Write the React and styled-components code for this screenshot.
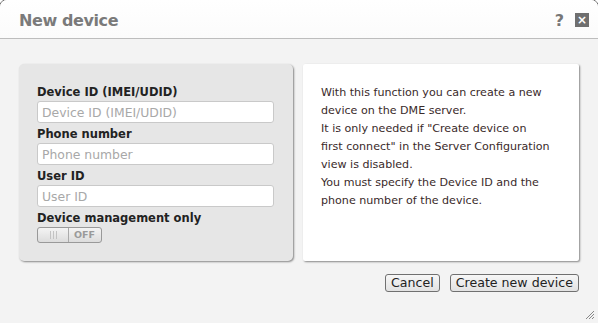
import React from 'react';
import styled, {createGlobalStyle} from 'styled-components';

const GlobalStyle = createGlobalStyle`
    html, body {
        margin: 0;
        padding: 0;
        background: #fff;
        overflow: hidden;
    }
    body {
        font-family: "DejaVu Sans", Verdana, sans-serif;
    }
`;

const Dialog = styled.div`
    margin: -1px;
    width: 598px;
    height: 323px;
    border: 1px solid #666;
    border-radius: 8px 8px 0 0;
    background: #f3f3f3;
    display: flex;
    flex-direction: column;
    position: relative;
    overflow: hidden;
`;

const TitleBar = styled.div`
    height: 39px;
    flex: none;
    display: flex;
    align-items: center;
    padding: 2px 9px 0 19px;
    background: linear-gradient(#fff, #fbfbfb);
    border-bottom: 1px solid #bdbdbd;
    box-sizing: border-box;
`;

const Title = styled.h1`
    flex: 1;
    margin: 0;
    font-size: 16px;
    font-weight: bold;
    color: #7a7a7a;
    letter-spacing: -0.4px;
`;

const Help = styled.span`
    font-size: 16px;
    font-weight: bold;
    color: #777;
    margin-right: 11px;
`;

const CloseButton = styled.span`
    width: 14px;
    height: 14px;
    background: #6f6f6f;
    color: #fff;
    font-size: 12px;
    font-weight: bold;
    line-height: 14px;
    text-align: center;
`;

const Body = styled.div`
    flex: 1;
    display: flex;
    flex-direction: column;
    padding: 25px 19px 0 19px;
`;

const Panels = styled.div`
    display: flex;
    gap: 10px;
    height: 197px;
`;

const FormPanel = styled.div`
    width: 274px;
    box-sizing: border-box;
    background: #e6e6e6;
    border-radius: 5px;
    box-shadow: 1px 1px 2px rgba(0, 0, 0, 0.45);
    padding: 20px 18px 0 18px;
    display: flex;
    flex-direction: column;
`;

const InfoPanel = styled.div`
    flex: 1;
    background: #fff;
    border-radius: 2px;
    box-shadow: 1px 1px 2px rgba(0, 0, 0, 0.45);
    padding: 20px 10px 0 18px;
    font-size: 11.1px;
    line-height: 18px;
    color: #3a2a2a;
    white-space: nowrap;
`;

const Label = styled.label`
    display: block;
    font-size: 11.5px;
    font-weight: bold;
    color: #222;
    line-height: 16px;
    margin-bottom: 1px;
`;

const Input = styled.input`
    display: block;
    box-sizing: border-box;
    width: 237px;
    height: 22px;
    margin: 0 0 3px 0;
    padding: 0 4px;
    border: 1px solid #c9c9c9;
    border-radius: 3px;
    background: #fff;
    font-family: "DejaVu Sans", Verdana, sans-serif;
    font-size: 12.4px;
    &::placeholder {
        color: #a8a8a8;
    }
`;

const Toggle = styled.div`
    display: flex;
    width: 65px;
    height: 16px;
    box-sizing: border-box;
    border: 1px solid #999;
    border-radius: 3px;
    overflow: hidden;
    background: linear-gradient(#f4f4f4, #dcdcdc);
`;

const ToggleKnob = styled.div`
    width: 30px;
    border-right: 1px solid #aaa;
    display: flex;
    justify-content: center;
    align-items: center;
    gap: 2px;
    & > i {
        width: 1px;
        height: 8px;
        background: #c3c3c3;
    }
`;

const ToggleText = styled.div`
    flex: 1;
    font-size: 9.5px;
    font-weight: bold;
    color: #9a9a9a;
    line-height: 14px;
    padding-left: 5px;
`;

const Actions = styled.div`
    display: flex;
    justify-content: flex-end;
    gap: 10px;
    margin-top: 13px;
`;

const Button = styled.button`
    height: 18px;
    padding: 0 5px;
    font-family: "DejaVu Sans", Verdana, sans-serif;
    font-size: 12.6px;
    color: #222;
    background: linear-gradient(#f7f7f7, #e2e2e2);
    border: 1px solid #707070;
    border-radius: 3px;
    line-height: 14px;
`;

const Grip = styled.svg`
    position: absolute;
    right: 3px;
    bottom: 3px;
`;

export default function App() {
    return (
        <>
            <GlobalStyle />
            <Dialog>
                <TitleBar>
                    <Title>New device</Title>
                    <Help>?</Help>
                    <CloseButton>×</CloseButton>
                </TitleBar>
                <Body>
                    <Panels>
                        <FormPanel>
                            <Label>Device ID (IMEI/UDID)</Label>
                            <Input placeholder="Device ID (IMEI/UDID)" />
                            <Label>Phone number</Label>
                            <Input placeholder="Phone number" />
                            <Label>User ID</Label>
                            <Input placeholder="User ID" />
                            <Label>Device management only</Label>
                            <Toggle>
                                <ToggleKnob><i /><i /><i /></ToggleKnob>
                                <ToggleText>OFF</ToggleText>
                            </Toggle>
                        </FormPanel>
                        <InfoPanel>
                            With this function you can create a new<br />
                            device on the DME server.<br />
                            It is only needed if "Create device on<br />
                            first connect" in the Server Configuration<br />
                            view is disabled.<br />
                            You must specify the Device ID and the<br />
                            phone number of the device.
                        </InfoPanel>
                    </Panels>
                    <Actions>
                        <Button>Cancel</Button>
                        <Button>Create new device</Button>
                    </Actions>
                </Body>
                <Grip width="10" height="10" viewBox="0 0 10 10">
                    <path d="M9 1 L1 9 M9 4 L4 9 M9 7 L7 9" stroke="#888" strokeWidth="1" />
                </Grip>
            </Dialog>
        </>
    );
}
